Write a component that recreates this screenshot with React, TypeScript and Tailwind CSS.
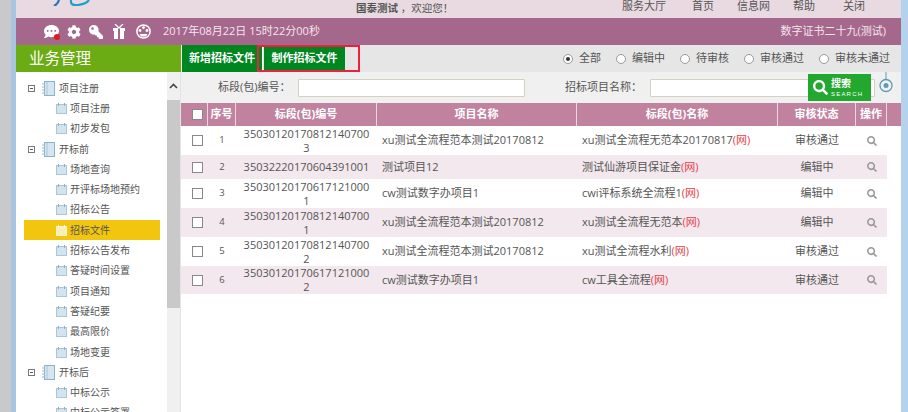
import { FaCog, FaCommentDots, FaKey, FaSearch } from "react-icons/fa";

const nav = [
  { label: "服务大厅", cls: "w-[70px]" },
  { label: "首页", cls: "w-[45px]" },
  { label: "信息网", cls: "w-[56px]" },
  { label: "帮助", cls: "w-[50px]" },
  { label: "关闭", cls: "w-[50px]" },
];

const tree = [
  { label: "项目注册", group: true },
  { label: "项目注册" },
  { label: "初步发包" },
  { label: "开标前", group: true },
  { label: "场地查询" },
  { label: "开评标场地预约" },
  { label: "招标公告" },
  { label: "招标文件", active: true },
  { label: "招标公告发布" },
  { label: "答疑时间设置" },
  { label: "项目通知" },
  { label: "答疑纪要" },
  { label: "最高限价" },
  { label: "场地变更" },
  { label: "开标后", group: true },
  { label: "中标公示" },
  { label: "中标公示签署" },
];

const radios = [
  { label: "全部", checked: true, cls: "w-[53px]" },
  { label: "编辑中", cls: "w-[64px]" },
  { label: "待审核", cls: "w-[64px]" },
  { label: "审核通过", cls: "w-[75px]" },
  { label: "审核未通过", cls: "w-[72px]" },
];

const rows = [
  { no: "350301201708121407003", project: "xu测试全流程范本测试20170812", name: "xu测试全流程无范本20170817", status: "审核通过", h: "h-[29px]" },
  { no: "35032220170604391001", project: "测试项目12", name: "测试仙游项目保证金", status: "编辑中", h: "h-[24px]", alt: true },
  { no: "350301201706171210001", project: "cw测试数字办项目1", name: "cwi评标系统全流程1", status: "编辑中", h: "h-[29px]" },
  { no: "350301201708121407001", project: "xu测试全流程范本测试20170812", name: "xu测试全流程无范本", status: "编辑中", h: "h-[29px]", alt: true },
  { no: "350301201708121407002", project: "xu测试全流程范本测试20170812", name: "xu测试全流程水利", status: "审核通过", h: "h-[29px]" },
  { no: "350301201706171210002", project: "cw测试数字办项目1", name: "cw工具全流程", status: "审核通过", h: "h-[28px]", alt: true },
];

function BookIcon({ small, active }: { small?: boolean; active?: boolean }) {
  if (small) {
    return (
      <svg width="11" height="11" viewBox="0 0 11 11" className="shrink-0">
        <rect x="0.5" y="1.5" width="10" height="9" fill={active ? "#fbeeb5" : "#d3e4ee"} stroke={active ? "#fff4c4" : "#a9c6da"} />
        <path d="M2.5 0v3M8.5 0v3" stroke={active ? "#fff" : "#8eb0c8"} />
      </svg>
    );
  }
  return (
    <svg width="13" height="15" viewBox="0 0 13 15" className="shrink-0">
      <rect x="2.5" y="0.5" width="10" height="14" fill="#d5e6f0" stroke="#8db2ca" />
      <path d="M5 1v13" stroke="#a9c8da" />
      <path d="M0 3h3M0 6h3M0 9h3M0 12h3" stroke="#9bbbd0" />
    </svg>
  );
}

function GiftIcon() {
  return (
    <svg width="14" height="15" viewBox="0 0 14 15" className="mr-[10px] shrink-0">
      <path d="M1 4h5v11H2V7H1zM8 4h5v3h-1v8H8z" fill="#fff" />
      <path d="M3 0l4 4 4-4" fill="none" stroke="#fff" strokeWidth="1.4" />
    </svg>
  );
}

function FaceIcon() {
  return (
    <svg width="15" height="15" viewBox="0 0 15 15" className="mr-[12px] shrink-0">
      <circle cx="7.5" cy="7.5" r="6.6" fill="none" stroke="#fff" strokeWidth="1.5" />
      <circle cx="7.5" cy="3.6" r="1.4" fill="#fff" />
      <circle cx="4" cy="6.5" r="1.4" fill="#fff" />
      <circle cx="11" cy="6.5" r="1.4" fill="#fff" />
      <path d="M3.5 10h8l-1.5 2.5h-5z" fill="#fff" />
    </svg>
  );
}

function TreeRow({ label, group, active }: { label: string; group?: boolean; active?: boolean }) {
  return (
    <div className={`flex items-center h-[20.3px] ${active ? "bg-[#f2c50f]" : ""} ${group ? "pl-[4px]" : "pl-[32px]"}`}>
      {group && (
        <span className="w-[7px] h-[7px] border border-[#777] flex items-center justify-center mr-[7px] shrink-0">
          <span className="w-[3px] h-px bg-[#555]" />
        </span>
      )}
      <BookIcon small={!group} active={active} />
      <span className={`text-[10px] text-[#555] ${group ? "ml-[4px]" : "ml-[3px]"}`}>{label}</span>
    </div>
  );
}

function Radio({ label, checked, cls }: { label: string; checked?: boolean; cls: string }) {
  return (
    <div className={`flex items-center shrink-0 ${cls}`}>
      <span className="w-[10px] h-[10px] rounded-full border border-[#999] bg-white flex items-center justify-center mr-[6px] shrink-0">
        {checked && <span className="w-[4px] h-[4px] rounded-full bg-[#333]" />}
      </span>
      <span className="text-[11px] text-[#555] whitespace-nowrap">{label}</span>
    </div>
  );
}

function Checkbox() {
  return <span className="block w-[11px] h-[11px] border border-[#888] bg-white" />;
}

export default function App() {
  return (
    <div className="w-[908px] h-[412px] overflow-hidden flex bg-white font-['Open_Sans','Noto_Sans_CJK_SC',sans-serif]">
      <div className="w-[16px] shrink-0 flex">
        <div className="w-[11px] bg-[#c9c9cc]" />
        <div className="w-[5px] bg-[#a9c4de]" />
      </div>

      <div className="w-[885px] shrink-0 flex flex-col">
        {/* top bar */}
        <div className="h-[18px] bg-[#e9dae1] flex items-start relative">
          <svg width="40" height="6" viewBox="0 0 40 6" className="absolute left-[37px] top-0">
            <path d="M6 0 Q5 4 1 6" fill="none" stroke="#1f74bd" strokeWidth="2.2" />
            <path d="M18 0 Q17 6 25 5 Q33 4 36 0" fill="none" stroke="#1f9fc7" strokeWidth="2.2" />
          </svg>
          <div className="ml-[340px] w-[266px] pt-[1px] text-[10.5px] leading-[14px] text-[#555]">
            <span className="font-bold">国泰测试</span>
            <span> ，欢迎您！</span>
          </div>
          {nav.map((n) => (
            <div key={n.label} className={`text-[11px] leading-[12px] text-[#555] shrink-0 ${n.cls}`}>
              {n.label}
            </div>
          ))}
        </div>

        {/* purple bar */}
        <div className="h-[27px] bg-[#a5678c] flex items-center text-[#f4e6ee] text-[11px] pl-[27px] pr-[15px]">
          <div className="relative mr-[8px] ml-px">
            <FaCommentDots size={15} color="#fff" />
            <span className="absolute right-[-1px] bottom-[-1px] w-[6px] h-[6px] rounded-full bg-[#d81e1e]" />
          </div>
          <FaCog size={14} color="#fff" className="mr-[8px]" />
          <FaKey size={14} color="#fff" className="mr-[9px] scale-x-[-1]" />
          <GiftIcon />
          <FaceIcon />
          <span>2017年08月22日 15时22分00秒</span>
          <span className="ml-auto">数字证书二十九(测试)</span>
        </div>

        <div className="flex flex-1 min-h-0">
          {/* sidebar */}
          <div className="w-[165px] shrink-0 flex flex-col border-r border-[#e4e4e4]">
            <div className="h-[27px] bg-[#6bac14] text-white text-[15.5px] leading-[27px] pl-[13px] shrink-0 -mr-px">业务管理</div>
            <div className="flex flex-1 min-h-0">
              <div className="w-[151px] pl-[8px] pr-[7px] pt-[6px] overflow-hidden">
                {tree.map((t, i) => (
                  <TreeRow key={i} label={t.label} group={t.group} active={t.active} />
                ))}
              </div>
              <div className="w-[13px] bg-[#f0f0f0] flex flex-col">
                <div className="h-[28px] flex items-center justify-center">
                  <svg width="9" height="6" viewBox="0 0 9 6">
                    <path d="M1 5l3.5-3.5L8 5" fill="none" stroke="#444" strokeWidth="1.6" />
                  </svg>
                </div>
                <div className="h-[208px] bg-[#c9c9c9]" />
              </div>
            </div>
          </div>

          {/* main */}
          <div className="flex-1 min-w-0 flex flex-col relative">
            {/* toolbar */}
            <div className="h-[27px] bg-[#e6e6e6] flex items-center shrink-0 relative border-l border-white">
              <div className="w-[81px] h-full bg-[#00861f] text-white text-[11px] font-bold flex items-center justify-center border-r border-white">新增招标文件</div>
              <div className="w-[81px] h-full bg-[#00861f] text-white text-[11px] font-bold flex items-center justify-center ml-px">制作招标文件</div>
              <div className="ml-[218px] flex items-center">
                {radios.map((r) => (
                  <Radio key={r.label} label={r.label} checked={r.checked} cls={r.cls} />
                ))}
              </div>
              <div className="absolute left-[75px] top-0 w-[103px] h-[27px] border-2 border-[#ee2040]" />
            </div>

            {/* search row */}
            <div className="h-[31px] bg-[#f0f0f0] flex items-center shrink-0 relative">
              <span className="ml-[37px] w-[80px] text-[11px] text-[#555] whitespace-nowrap">标段(包)编号：</span>
              <input className="w-[227px] h-[18px] bg-white border border-[#d5d0c0] rounded-[1px]" />
              <span className="ml-[40px] w-[85px] text-[11px] text-[#555] whitespace-nowrap">招标项目名称：</span>
              <input className="w-[225px] h-[18px] bg-white border border-[#d5d0c0] rounded-[1px]" />
              <div className="absolute left-[627px] top-[2px] w-[63px] h-[27px] bg-[#22a82e] flex items-center text-white pl-[5px]">
                <FaSearch size={15} />
                <div className="ml-[3px] flex flex-col items-start">
                  <span className="text-[10px] font-bold leading-[13px]">搜索</span>
                  <span className="text-[6px] leading-[8px] tracking-[1.2px] font-['Liberation_Sans',sans-serif]">SEARCH</span>
                </div>
              </div>
              <svg width="16" height="28" viewBox="0 0 16 28" className="absolute left-[697px] top-0">
                <path d="M8 0v7" stroke="#5f9ab5" />
                <circle cx="8" cy="13.5" r="6" fill="#eef4f6" stroke="#5f9ab5" strokeWidth="1.3" />
                <circle cx="8" cy="13.5" r="2.5" fill="#5f9ab5" />
              </svg>
            </div>

            {/* table head */}
            <div className="h-[23px] bg-[#c0829f] flex shrink-0 text-white text-[11px] font-bold">
              <div className="w-[27px] flex items-center pl-[11px] border-r border-[#ecd6e0]"><Checkbox /></div>
              <div className="w-[28px] flex items-center justify-center border-r border-[#ecd6e0]">序号</div>
              <div className="w-[141px] flex items-center justify-center border-r border-[#ecd6e0]">标段(包)编号</div>
              <div className="w-[200px] flex items-center justify-center border-r border-[#ecd6e0]">项目名称</div>
              <div className="w-[201px] flex items-center justify-center border-r border-[#ecd6e0]">标段(包)名称</div>
              <div className="w-[78px] flex items-center justify-center border-r border-[#ecd6e0]">审核状态</div>
              <div className="w-[31px] flex items-center justify-center border-r border-[#ecd6e0]">操作</div>
            </div>

            {/* table body */}
            <div className="w-[706px]">
              {rows.map((r, i) => (
                <div key={i} className={`flex items-center text-[#555] ${r.h} ${r.alt ? "bg-[#f3e8ed]" : "bg-white"}`}>
                  <div className="w-[27px] flex pl-[11px] shrink-0"><Checkbox /></div>
                  <div className="w-[28px] text-center text-[9.5px] shrink-0">{i + 1}</div>
                  <div className="w-[141px] px-[6px] text-center text-[11px] leading-[14px] break-all shrink-0">{r.no}</div>
                  <div className="w-[200px] pl-[5px] text-[11px] shrink-0 whitespace-nowrap">{r.project}</div>
                  <div className="w-[201px] pl-[5px] text-[11px] shrink-0 whitespace-nowrap">
                    {r.name}
                    <span className="text-[#e8404a]">(网)</span>
                  </div>
                  <div className="w-[78px] text-center text-[11px] shrink-0">{r.status}</div>
                  <div className="w-[31px] flex justify-center shrink-0">
                    <FaSearch size={10} color="#999" />
                  </div>
                </div>
              ))}
            </div>
          </div>
        </div>
      </div>

      <div className="flex-1 bg-[#b4d2ec]" />
    </div>
  );
}
